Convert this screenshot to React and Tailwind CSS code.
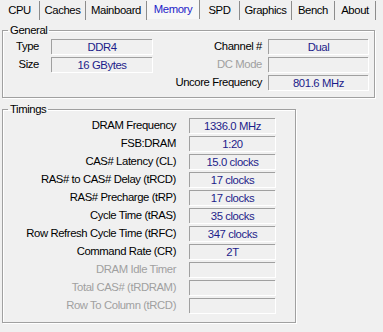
const tabs = [
  { name: 'CPU', w: 'w-[40px]' },
  { name: 'Caches', w: 'w-[46px]' },
  { name: 'Mainboard', w: 'w-[61px]' },
  { name: 'Memory', w: 'w-[53px]', active: true },
  { name: 'SPD', w: 'w-[40px]' },
  { name: 'Graphics', w: 'w-[52px]' },
  { name: 'Bench', w: 'w-[43px]' },
  { name: 'About', w: 'w-[41px]' },
]

const timings = [
  ['DRAM Frequency', '1336.0 MHz'],
  ['FSB:DRAM', '1:20'],
  ['CAS# Latency (CL)', '15.0 clocks'],
  ['RAS# to CAS# Delay (tRCD)', '17 clocks'],
  ['RAS# Precharge (tRP)', '17 clocks'],
  ['Cycle Time (tRAS)', '35 clocks'],
  ['Row Refresh Cycle Time (tRFC)', '347 clocks'],
  ['Command Rate (CR)', '2T'],
  ['DRAM Idle Timer', '', true],
  ['Total CAS# (tRDRAM)', '', true],
  ['Row To Column (tRCD)', '', true],
]

// sunken read-only value box, like a static edge control
function Field({ value, className = '' }) {
  return (
    <div
      className={`h-[15px] border-t border-l border-[#a0a0a0] shadow-[1px_1px_0_#fff] bg-[#f0f0f0] text-center leading-[14px] text-[#1c1c8a] ${className}`}
    >
      {value}
    </div>
  )
}

function Group({ title, className = '', children }) {
  return (
    <fieldset className={`border border-[#a0a0a0] shadow-[1px_1px_0_#fff,inset_1px_1px_0_#fff] ${className}`}>
      <legend className="ml-[5px] px-[2px] leading-[13px] text-black">{title}</legend>
      {children}
    </fieldset>
  )
}

export default function App() {
  return (
    <div className="w-[383px] h-[332px] overflow-hidden bg-[#f0f0f0] font-['Liberation_Sans',Arial,sans-serif] text-[11.3px] leading-[15px] tracking-[-0.4px] text-black">
      {/* tab strip */}
      <div className="flex h-[21px] items-start">
        {tabs.map((t) => (
          <div
            key={t.name}
            className={`${t.w} h-[19px] flex items-center justify-center border-r border-[#8c8c8c] ${
              t.active ? 'bg-[#f7f7f7] text-[#2323c8]' : 'mt-[1px] h-[18px]'
            }`}
          >
            {t.name}
          </div>
        ))}
      </div>

      <div className="pl-[2px] pt-[3px]">
        <Group title="General" className="w-[373px] pb-[7px] pr-[6px]">
          <div className="flex flex-col gap-[3px] pt-[2px]">
            <div className="flex items-center">
              <div className="w-[36px] text-right">Type</div>
              <Field value="DDR4" className="ml-[12px] w-[101px]" />
              <div className="flex-1 text-right pr-[6px]">Channel #</div>
              <Field value="Dual" className="w-[100px]" />
            </div>
            <div className="flex items-center">
              <div className="w-[36px] text-right">Size</div>
              <Field value="16 GBytes" className="ml-[12px] w-[101px]" />
              <div className="flex-1 text-right pr-[6px] text-[#a0a0a0]">DC Mode</div>
              <Field value="" className="w-[100px]" />
            </div>
            <div className="flex items-center">
              <div className="flex-1 text-right pr-[6px]">Uncore Frequency</div>
              <Field value="801.6 MHz" className="w-[100px]" />
            </div>
          </div>
        </Group>

        <Group title="Timings" className="mt-[5px] w-[294px] pb-[9px]">
          <div className="flex flex-col gap-[3px] pt-[2px]">
            {timings.map(([label, value, disabled]) => (
              <div key={label} className="flex items-center">
                <div className={`w-[173px] text-right ${disabled ? 'text-[#a0a0a0]' : ''}`}>{label}</div>
                <Field value={value} className="ml-[13px] w-[86px]" />
              </div>
            ))}
          </div>
        </Group>
      </div>
    </div>
  )
}
